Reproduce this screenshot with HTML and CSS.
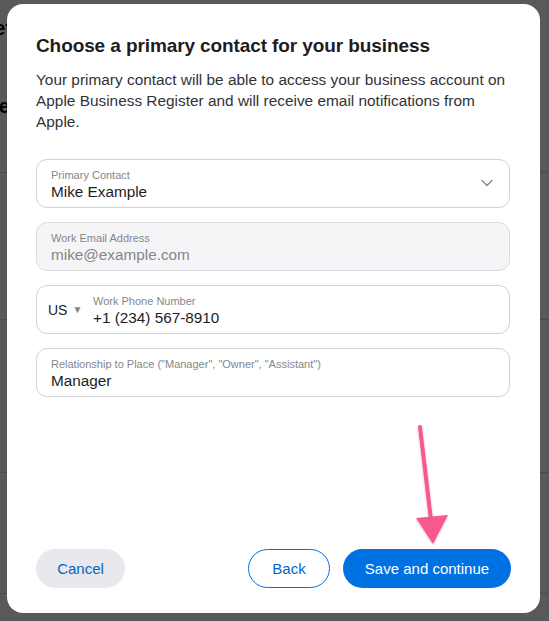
FILE: index.html
```html
<!DOCTYPE html>
<html lang="en">
<head>
<meta charset="utf-8">
<title>Choose a primary contact</title>
<link rel="stylesheet" href="styles.css">
</head>
<body>
<div class="page">
  <div class="page-row page-row-1"><span class="page-text page-text-1">Get</span><span class="page-text page-text-2">Type</span></div>
  <div class="page-row page-row-2"></div>
  <div class="page-row page-row-3"></div>
  <div class="page-row page-row-4"></div>
</div>
<div class="overlay">
  <div class="modal" role="dialog" aria-labelledby="dlg-title">
    <h1 id="dlg-title" class="title">Choose a primary contact for your business</h1>
    <p class="intro">Your primary contact will be able to access your business account on Apple Business Register and will receive email notifications from Apple.</p>

    <div class="fields">
      <div class="field">
        <div class="field-body">
          <span class="label">Primary Contact</span>
          <span class="value">Mike Example</span>
        </div>
        <svg class="chevron" width="12" height="8" viewBox="0 0 12 8" aria-hidden="true"><path d="M1 1.5 L6 6.5 L11 1.5" fill="none" stroke="#86868b" stroke-width="1.3" stroke-linecap="round" stroke-linejoin="round"/></svg>
      </div>

      <div class="field field-disabled">
        <div class="field-body">
          <span class="label">Work Email Address</span>
          <span class="value value-muted">mike@example.com</span>
        </div>
      </div>

      <div class="field field-phone">
        <div class="country">US <span class="caret">&#9660;</span></div>
        <div class="field-body">
          <span class="label">Work Phone Number</span>
          <span class="value">+1 (234) 567-8910</span>
        </div>
      </div>

      <div class="field">
        <div class="field-body">
          <span class="label">Relationship to Place ("Manager", "Owner", "Assistant")</span>
          <span class="value">Manager</span>
        </div>
      </div>
    </div>

    <div class="actions">
      <button class="btn btn-cancel">Cancel</button>
      <div class="actions-right">
        <button class="btn btn-back">Back</button>
        <button class="btn btn-primary">Save and continue</button>
      </div>
    </div>

    <svg class="arrow" width="50" height="130" viewBox="0 0 50 130" aria-hidden="true">
      <defs>
        <filter id="sh" x="-50%" y="-50%" width="200%" height="200%">
          <feDropShadow dx="0" dy="1" stdDeviation="1.2" flood-color="#000" flood-opacity="0.25"/>
        </filter>
      </defs>
      <g filter="url(#sh)">
        <line x1="10" y1="5" x2="21" y2="98" stroke="#f8598d" stroke-width="4" stroke-linecap="round"/>
        <polygon points="6,96 38,93 23,122" fill="#f8598d"/>
      </g>
    </svg>
  </div>
</div>
</body>
</html>
```

FILE: styles.css
```css
html, body {
  margin: 0;
  padding: 0;
}

body {
  width: 549px;
  height: 621px;
  overflow: hidden;
  font-family: "Liberation Sans", Arial, sans-serif;
  background: #ffffff;
  position: relative;
}

.page {
  height: 621px;
  display: flex;
  flex-direction: column;
}

.page-row {
  border-bottom: 1px solid #d6d6d6;
  position: relative;
}

.page-row-1 { height: 172px; }
.page-row-2 { height: 146px; }
.page-row-3 { height: 152px; }
.page-row-4 { height: 120px; }

.page-text {
  position: absolute;
  font-weight: 700;
  font-size: 20px;
  line-height: 24px;
  color: #000;
  white-space: nowrap;
}

.page-text-1 { right: 537px; top: 16px; }
.page-text-2 { right: 539px; top: 94px; }

.overlay {
  position: absolute;
  inset: 0;
  background: rgba(0, 0, 0, 0.65);
  display: flex;
  align-items: flex-start;
  padding: 4px 9px 0 7px;
}

.modal {
  position: relative;
  width: 533px;
  height: 609px;
  box-sizing: border-box;
  background: #ffffff;
  border-radius: 16px;
  padding: 30px 30px 25px 29px;
  display: flex;
  flex-direction: column;
  color: #1d1d1f;
}

.title {
  margin: 0;
  font-size: 19px;
  line-height: 24px;
  font-weight: 700;
  color: #1d1d1f;
  letter-spacing: -0.1px;
}

.intro {
  margin: 11px 0 0;
  font-size: 15.4px;
  line-height: 21px;
  color: #333336;
}

.fields {
  margin-top: 27px;
  display: flex;
  flex-direction: column;
  gap: 14px;
}

.field {
  height: 49px;
  box-sizing: border-box;
  border: 1px solid #d2d2d7;
  border-radius: 11px;
  display: flex;
  align-items: center;
  padding: 0 14px 0 14px;
  background: #ffffff;
}

.field-disabled {
  background: #f5f5f7;
  border-color: #dcdce0;
}

.field-body {
  flex: 1;
  display: flex;
  flex-direction: column;
  padding-top: 1px;
}

.label {
  font-size: 11px;
  line-height: 14px;
  color: #86868b;
}

.value {
  font-size: 15.3px;
  line-height: 19px;
  color: #1d1d1f;
}

.value-muted {
  color: #86868b;
}

.chevron {
  margin-right: 2px;
  margin-bottom: 2px;
}

.field-phone {
  padding-left: 11px;
}

.country {
  width: 45px;
  font-size: 14px;
  color: #1d1d1f;
  display: flex;
  align-items: center;
  gap: 5px;
}

.caret {
  font-size: 10px;
  color: #86868b;
}

.actions {
  margin-top: auto;
  display: flex;
  justify-content: space-between;
  align-items: center;
}

.actions-right {
  display: flex;
  gap: 13px;
  margin-right: -1px;
}

.btn {
  height: 39px;
  border-radius: 20px;
  font-family: "Liberation Sans", Arial, sans-serif;
  font-size: 15px;
  padding: 0;
  cursor: pointer;
  box-sizing: border-box;
}

.btn-cancel {
  width: 89px;
  background: #e8e8ed;
  border: none;
  color: #0066cc;
}

.btn-back {
  width: 82px;
  background: #ffffff;
  border: 1px solid #0071e3;
  color: #0066cc;
}

.btn-primary {
  width: 168px;
  background: #0071e3;
  border: none;
  color: #ffffff;
}

.arrow {
  position: absolute;
  left: 403px;
  top: 418px;
}
```
